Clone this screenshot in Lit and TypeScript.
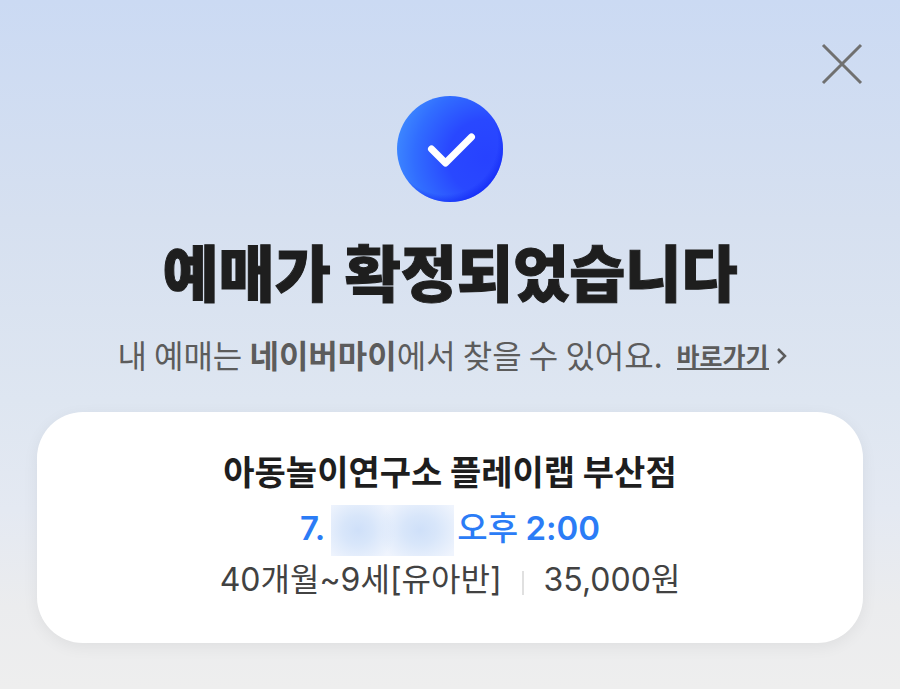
import { LitElement, html, css } from "lit";
import { customElement } from "lit/decorators.js";

@customElement("app-root")
export class AppRoot extends LitElement {
  static styles = css`
    :host {
      display: block;
      font-family: "Noto Sans CJK KR", sans-serif;
      color: #1e1e1e;
    }
    .page {
      box-sizing: border-box;
      min-height: 100vh;
      padding: 40px 37px 46px;
      background: linear-gradient(#cbdaf3 0%, #d6e0f0 32%, #dee6f1 58%, #e4e9f2 74%, #ebecee 88%, #eeeeee 100%);
    }
    .bar {
      display: flex;
      justify-content: flex-end;
      height: 56px;
    }
    .close {
      width: 48px;
      height: 48px;
      margin-right: -3px;
      padding: 0;
      border: 0;
      background: none;
      cursor: pointer;
    }
    svg {
      display: block;
    }
    .badge {
      margin: 0 auto;
    }
    h1 {
      margin: 33px 0 0;
      font-size: 61px;
      line-height: 72px;
      font-weight: 900;
      -webkit-text-stroke: 1px currentColor;
      text-align: center;
      white-space: nowrap;
    }
    .guide {
      display: flex;
      justify-content: center;
      align-items: center;
      margin: 27px 0 38px;
      padding-left: 4px;
      font-size: 32px;
      line-height: 40px;
      color: #5c5c5c;
      white-space: nowrap;
    }
    .guide p {
      margin: 0;
    }
    .go {
      display: flex;
      align-items: center;
      gap: 8px;
      margin-left: 14px;
      padding-top: 3px;
      font-size: 25px;
      line-height: 30px;
      font-weight: 700;
      color: inherit;
      text-decoration: none;
    }
    .go span {
      border-bottom: 2px solid;
      line-height: 26px;
    }
    .card {
      padding: 34px 24px 38px;
      border-radius: 46px;
      background: #fff;
      box-shadow: 0 4px 16px rgba(0, 0, 0, 0.06);
      text-align: center;
      white-space: nowrap;
    }
    h2 {
      margin: 0;
      font-size: 34px;
      line-height: 50px;
      font-weight: 700;
    }
    .row {
      display: flex;
      justify-content: center;
      align-items: flex-start;
      margin: 0;
      line-height: 43px;
    }
    .when {
      margin-top: 9px;
      font-size: 33px;
      font-weight: 500;
      color: #2b7cf6;
    }
    .num {
      font-family: Inter, sans-serif;
      line-height: 1;
    }
    .when .num {
      font-weight: 600;
    }
    .hidden-date {
      width: 123px;
      height: 51px;
      margin: 0 3px 0 6px;
      background:
        radial-gradient(ellipse 38px 36px at 27px 25px, #cfe0f9, #d8e6fa 40%, transparent),
        radial-gradient(ellipse 42px 36px at 89px 25px, #cfe0f9, #d8e6fa 40%, transparent),
        #eff4fd;
    }
    .what {
      padding-bottom: 6px;
      font-size: 32px;
      color: #424242;
    }
    .rule {
      width: 2px;
      height: 24px;
      margin: 15px 20px 0;
      background: #e0e0e0;
    }
  `;

  render() {
    return html`
      <main class="page">
        <div class="bar">
          <button class="close" type="button" aria-label="닫기">
            <svg width="48" height="48" viewBox="0 0 48 48" fill="none" stroke="#707070" stroke-width="3">
              <path d="M5 5 43 43M43 5 5 43" />
            </svg>
          </button>
        </div>
        <svg class="badge" width="106" height="106" viewBox="0 0 106 106" aria-hidden="true">
          <defs>
            <radialGradient id="base" cx="0.84" cy="0.58" r="0.9">
              <stop offset="0" stop-color="#2742ff" />
              <stop offset="0.4" stop-color="#2948ff" />
              <stop offset="0.75" stop-color="#316dff" />
              <stop offset="1" stop-color="#3f8cff" />
            </radialGradient>
            <radialGradient id="edge" cx="0.45" cy="0.43" r="0.58">
              <stop offset="0.86" stop-color="#1228f5" stop-opacity="0" />
              <stop offset="1" stop-color="#1228f5" stop-opacity="0.7" />
            </radialGradient>
          </defs>
          <circle cx="53" cy="53" r="53" fill="url(#base)" />
          <circle cx="53" cy="53" r="53" fill="url(#edge)" />
          <path d="M34.500 53 48.500 67 74.500 41" fill="none" stroke="#fff" stroke-width="7" stroke-linecap="round" stroke-linejoin="round" />
        </svg>
        <h1>예매가 확정되었습니다</h1>
        <div class="guide">
          <p>내 예매는 <b>네이버마이</b>에서 찾을 수 있어요.</p>
          <a class="go" href="#my">
            <span>바로가기</span>
            <svg width="10" height="18" viewBox="0 0 10 18" fill="none" stroke="currentColor" stroke-width="2.500" aria-hidden="true">
              <path d="M1 2 8 9 1 16" />
            </svg>
          </a>
        </div>
        <section class="card">
          <h2>아동놀이연구소 플레이랩 부산점</h2>
          <p class="row when">
            <span><span class="num">7.</span></span>
            <span class="hidden-date"></span>
            <span>오후 <span class="num">2:00</span></span>
          </p>
          <p class="row what">
            <span><span class="num">40</span>개월<span class="num">~9</span>세<span class="num">[</span>유아반<span class="num">]</span></span>
            <span class="rule"></span>
            <span><span class="num">35,000</span>원</span>
          </p>
        </section>
      </main>
    `;
  }
}
